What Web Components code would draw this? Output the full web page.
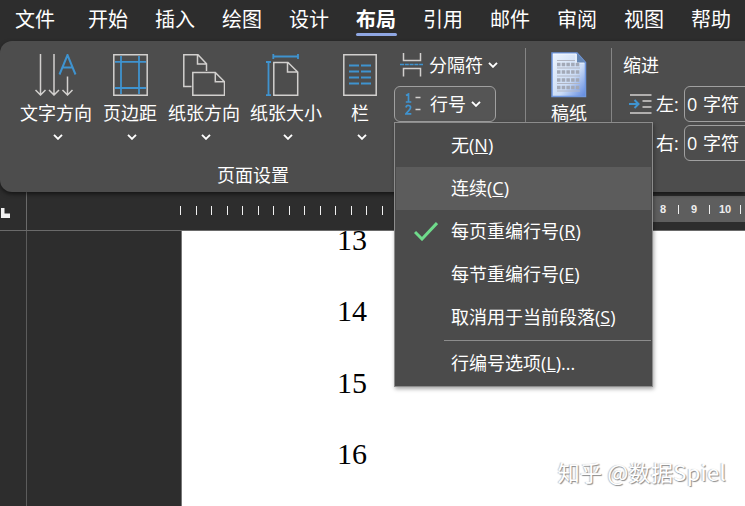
<!DOCTYPE html>
<html lang="zh-CN">
<head>
<meta charset="UTF-8">
<title>布局</title>
<style>
  html, body { height: 100%; }
  body {
    margin: 0;
    overflow: hidden;
    background: #2d2d2d;
    color: #fff;
    font: 18px/24px 'Open Sans', 'Noto Sans CJK SC', sans-serif;
  }
</style>
</head>
<body>
<word-window></word-window>

<script>
(function () {
  'use strict';

  // Base comum: clona o markup para um shadow root aberto
  function define(name, html) {
    customElements.define(name, class extends HTMLElement {
      constructor() {
        super();
        var tpl = document.createElement('template');
        tpl.innerHTML = typeof html === 'function' ? html(this) : html;
        this.attachShadow({ mode: 'open' }).appendChild(tpl.content.cloneNode(true));
      }
    });
  }

  /* ---------- ícones ---------- */
  var ICONS = {
    direction: [42, 42, `
      <g fill="none" stroke="#d2d0ce" stroke-width="1.5">
        <path d="M5.5 0v41M.5 36l5 5 5-5M19 0v41M14 36l5 5 5-5M32.5 22.5V41M27.5 36l5 5 5-5"/>
        <path d="M24.5 20.5L32.5 1l8 19.5M27.5 13.5h10" stroke="#3f93cf" stroke-width="2"/>
      </g>`],
    margins: [35, 42, `
      <path d="M.8.8h33.4v40.4H.8z" fill="none" stroke="#d2d0ce" stroke-width="1.5"/>
      <path d="M8 2v38M26 2v38M2 7.8h31M2 34h31" stroke="#3f93cf" stroke-width="1.8"/>`],
    orientation: [42, 42, `
      <g fill="none" stroke="#d2d0ce" stroke-width="1.5">
        <path d="M8.5 32.5H.8V.8H15l8.5 9V17M14.5 .8v9.2h9"/>
        <path d="M9.8 18.5h22.5l9.2 9.2v13.5H9.8zM32.3 18.5v9.2h9.2"/>
      </g>`],
    size: [33, 42, `
      <g fill="none" stroke-width="1.5">
        <path d="M7.8 8.5H22l9.7 9.5v23.2H7.8zM21.5 8.5V18h10.2" stroke="#d2d0ce"/>
        <path d="M7 2.5h25.5M7.3 0v5M32 0v5M2.5 8v33.5M0 8h5M0 41.2h5" stroke="#3f93cf" stroke-width="1.8"/>
      </g>`],
    columns: [34, 42, `
      <path d="M.8.8h32.4v40.4H.8z" fill="none" stroke="#d2d0ce" stroke-width="1.5"/>
      <path d="M6 11.5h10M18 11.5h10M6 17.5h10M18 17.5h10M6 23.5h10M18 23.5h10M6 29.5h10M18 29.5h10" stroke="#3f93cf" stroke-width="1.8"/>`],
    breaks: [23, 24, `
      <path d="M3.5 0v7.5h17V0M3.5 23.5v-8h17v8" fill="none" stroke="#d2d0ce" stroke-width="1.5"/>
      <path d="M0 11.5h23" stroke="#3f93cf" stroke-width="1.5" stroke-dasharray="4 .8"/>`],
    numbers: [17, 22, `
      <path d="M1 2.5L3.5 1v8M.8 9h5.5M1 14.5c.5-3 5-2.5 4.5 .3C5.2 17 2.5 18.5 1 20.8h5.3" fill="none" stroke="#3f93cf" stroke-width="1.7"/>
      <path d="M10.500 4.500h5M10.500 16.500h5" stroke="#d2d0ce" stroke-width="1.500"/>`],
    indent: [23, 21, `
      <path d="M1 1h21.5M13.5 7h9M13.5 13h9M1 19h21.5" stroke="#d2d0ce" stroke-width="1.5"/>
      <path d="M0 10h9M5.5 6l4 4-4 4" fill="none" stroke="#3f93cf" stroke-width="2"/>`],
    paper: [36, 46, `
      <defs>
        <linearGradient id="g" x1="0" y1="0" x2="1" y2="1">
          <stop offset="0" stop-color="#edf4fd"/><stop offset=".6" stop-color="#cbdcf6"/><stop offset="1" stop-color="#5c86df"/>
        </linearGradient>
      </defs>
      <path d="M1 1h25l8.5 9.5V44.5H1z" fill="url(#g)" stroke="#7098df" stroke-width="1.5"/>
      <path d="M2 2h23v9h8" fill="none" stroke="#fff" stroke-opacity=".7"/>
      <path d="M26 1v9.5h8.5z" fill="#6687b4"/>
      <path d="M6 8.5h18M6 16h23M6 24h23M6 31.5h23M6 39h23" stroke="#b1b5c2"/>
      <path d="M6 12.5h23M6 20h23M6 28h23M6 35.5h23" stroke="#a3a9b7" stroke-width="3.5" stroke-dasharray="3.5 1.2"/>`],
    chevron: [10, 6, `<path d="M1 .8l4 4 4-4" fill="none" stroke="#fff" stroke-width="1.9"/>`],
    check: [24, 19, `<path d="M1 10l7 7L23 1" fill="none" stroke="#6fdb8b" stroke-width="3"/>`],
    tabstop: [10, 10, `<path d="M1 0h3.5v5.500H10V10H1z" fill="#f2f2f2"/>`]
  };

  define('ui-icon', function (el) {
    var i = ICONS[el.getAttribute('name')];
    return `<style>:host { display: block; flex: none; } svg { display: block; }</style>
      <svg width="${i[0]}" height="${i[1]}" viewBox="0 0 ${i[0]} ${i[1]}">${i[2]}</svg>`;
  });

  /* ---------- abas ---------- */
  define('ribbon-tab', `
    <style>
      :host { display: block; height: 41px; font-size: 20px; line-height: 39px; white-space: nowrap; }
      :host(:first-child) { margin-right: 6px; }
      :host([active]) { font-weight: 700; }
      :host([active])::after {
        content: ''; display: block; height: 3px; margin: -6px -1px 0 0;
        border-radius: 2px; background: #8fa7e3;
      }
    </style>
    <slot></slot>`);

  define('ribbon-tabs', `
    <style>:host { display: flex; gap: 27px; height: 41px; padding-left: 15px; }</style>
    <slot></slot>`);

  /* ---------- botões ---------- */
  define('big-button', function (el) {
    var shift = el.getAttribute('shift') || 0;
    return `
      <style>
        :host { display: flex; flex-direction: column; align-items: center; white-space: nowrap; }
        .pic { height: 47px; margin-left: ${shift}px; }
        :host([plain]) .pic { height: 49px; }
        .arrow { margin: 9px 0 0 4px; }
      </style>
      <ui-icon class="pic" name="${el.getAttribute('icon')}"></ui-icon>
      <slot></slot>
      ${el.hasAttribute('plain') ? '' : '<ui-icon class="arrow" name="chevron"></ui-icon>'}`;
  });

  define('small-button', function (el) {
    return `
      <style>
        :host {
          display: grid; grid-template-columns: 29px auto 10px; align-items: center; justify-content: start;
          box-sizing: border-box; height: 36px; padding-left: 6px; white-space: nowrap;
        }
        .arrow { margin-left: 5px; }
        :host([open]) {
          width: 102px; padding-left: 10px; grid-template-columns: 25px auto 10px;
          background: #555; border: 1px solid #a0a0a0; border-radius: 6px;
        }
      </style>
      <ui-icon name="${el.getAttribute('icon')}"></ui-icon>
      <span><slot></slot></span>
      <ui-icon class="arrow" name="chevron"></ui-icon>`;
  });

  define('indent-field', `
    <style>
      :host { display: flex; align-items: center; white-space: nowrap; height: 36px; }
      .icon { width: 27px; margin-left: 5px; flex: none; }
      .label { width: 28px; flex: none; }
      .box {
        box-sizing: border-box; height: 36px; width: 110px; flex: none; padding-left: 2px;
        border: 1px solid #a0a0a0; border-radius: 6px; line-height: 34px; word-spacing: 1px;
      }
    </style>
    <span class="icon"><slot name="icon"></slot></span>
    <span class="label"><slot name="label"></slot></span>
    <span class="box"><slot></slot></span>`);

  /* ---------- menu suspenso ---------- */
  define('menu-item', function (el) {
    return `
      <style>
        :host { display: grid; grid-template-columns: 56px 1fr; align-items: center; height: 43px; white-space: nowrap; }
        :host([hover]) { background: #5c5c5c; margin: 0 1px; grid-template-columns: 55px 1fr; }
        .mark { padding-left: 19px; }
        .text { margin-top: -2px; }
      </style>
      <span class="mark">${el.hasAttribute('checked') ? '<ui-icon name="check"></ui-icon>' : ''}</span>
      <span class="text"><slot></slot></span>`;
  });

  define('drop-menu', `
    <style>
      :host {
        display: block; box-sizing: border-box; width: 259px; height: 265px; padding-top: 1px;
        background: #4b4b4b; border: 1px solid #8c8c8c; box-shadow: 1px 2px 4px rgba(0, 0, 0, .35);
      }
      ::slotted(hr) { margin: 1px 1px 1px 49px; border: 0; border-top: 1px solid #8c8c8c; }
    </style>
    <slot></slot>`);

  /* ---------- faixa de opções ---------- */
  define('layout-ribbon', `
    <style>
      :host {
        display: flex; box-sizing: border-box; height: 151px; position: relative; z-index: 2;
        background: #4d4d4d; border-radius: 12px 0 0 12px; box-shadow: 0 2px 4px rgba(0, 0, 0, .55);
      }
      .setup { width: 506px; padding-left: 19px; flex: none; display: flex; flex-direction: column; }
      .tools { display: flex; height: 122px; }
      .big { display: grid; grid-template-columns: 74px 74px 74px 90px 58px; padding-top: 13px; height: 110px; }
      .stack { display: flex; flex-direction: column; gap: 3px; padding: 6px 0 0 5px; }
      .anchor { position: relative; }
      drop-menu { position: absolute; left: 0; top: 36px; }
      .caption { padding-left: 198px; }
      .line { width: 1px; height: 132px; margin-top: 7px; background: #858585; flex: none; }
      .paper { width: 85px; padding-top: 11px; flex: none; }
      .paper big-button { margin-left: 1px; }
      .indent { padding: 12px 0 0 12px; flex: none; }
      .title { margin-left: -1px; }
      .first { margin: 9px 0 3px; }
    </style>
    <div class="setup">
      <div class="tools">
        <div class="big">
          <big-button icon="direction">文字方向</big-button>
          <big-button icon="margins">页边距</big-button>
          <big-button icon="orientation">纸张方向</big-button>
          <big-button icon="size" shift="-8">纸张大小</big-button>
          <big-button icon="columns">栏</big-button>
        </div>
        <div class="stack">
          <small-button icon="breaks">分隔符</small-button>
          <div class="anchor">
            <small-button icon="numbers" open>行号</small-button>
            <drop-menu>
              <menu-item>无(<u>N</u>)</menu-item>
              <menu-item hover>连续(<u>C</u>)</menu-item>
              <menu-item checked>每页重编行号(<u>R</u>)</menu-item>
              <menu-item>每节重编行号(<u>E</u>)</menu-item>
              <menu-item>取消用于当前段落(<u>S</u>)</menu-item>
              <hr>
              <menu-item>行编号选项(<u>L</u>)...</menu-item>
            </drop-menu>
          </div>
        </div>
      </div>
      <div class="caption">页面设置</div>
    </div>
    <div class="line"></div>
    <div class="paper"><big-button icon="paper" plain>稿纸</big-button></div>
    <div class="line"></div>
    <div class="indent">
      <div class="title">缩进</div>
      <indent-field class="first"><ui-icon slot="icon" name="indent"></ui-icon><span slot="label">左:</span>0 字符</indent-field>
      <indent-field><span slot="label">右:</span>0 字符</indent-field>
    </div>`);

  /* ---------- régua ---------- */
  define('page-ruler', function () {
    var ticks = '';
    for (var i = 0; i < 14; i++) ticks += '<i></i>';
    return `
      <style>
        :host { display: flex; height: 38px; border-bottom: 1px solid #6a6a6a; font: 700 11px/14px 'Liberation Sans', sans-serif; }
        .corner { width: 26px; border-right: 1px solid #6a6a6a; padding-top: 16px; box-sizing: content-box; }
        .ticks { display: flex; gap: 14.54px; padding: 14px 0 0 153px; width: 473px; box-sizing: border-box; }
        i { width: 1px; height: 9px; background: #f0f0f0; flex: none; }
        .scale { display: flex; flex: 1; align-items: center; height: 26px; margin-top: 4px; background: #5e5e5e; color: #eee; padding-left: 147.5px; }
        .scale span { width: 31px; text-align: center; flex: none; }
        .scale i { margin: 0 -.5px; }
      </style>
      <div class="corner"><ui-icon name="tabstop"></ui-icon></div>
      <div class="ticks">${ticks}</div>
      <div class="scale"><span>8</span><i></i><span>9</span><i></i><span>10</span><i></i></div>`;
  });

  /* ---------- documento ---------- */
  define('doc-page', `
    <style>
      :host { display: flex; flex: 1; min-height: 0; position: relative; overflow: hidden; }
      .gutter { width: 26px; border-right: 1px solid #5c5c5c; flex: none; }
      .desk { width: 154px; border-right: 1px solid #777; flex: none; }
      .page { flex: 1; background: #fff; color: #000; padding-left: 155px; font: 30px/71.5px 'Liberation Serif', serif; }
      .lines { margin-top: -27.5px; }
      .sign {
        position: absolute; right: 19px; bottom: 20px; color: #fff; font: 400 22px/30px 'Noto Sans CJK SC', sans-serif;
        text-shadow: 1px 1px 1px #888, -1px 0 1px #c4c4c4; white-space: pre; letter-spacing: .3px;
      }
    </style>
    <div class="gutter"></div>
    <div class="desk"></div>
    <div class="page">
      <div class="lines"><div>13</div><div>14</div><div>15</div><div>16</div></div>
    </div>
    <div class="sign">知乎 @数据Spiel</div>`);

  define('word-window', `
    <style>:host { display: flex; flex-direction: column; height: 100vh; overflow: hidden; }</style>
    <ribbon-tabs>
      <ribbon-tab>文件</ribbon-tab>
      <ribbon-tab>开始</ribbon-tab>
      <ribbon-tab>插入</ribbon-tab>
      <ribbon-tab>绘图</ribbon-tab>
      <ribbon-tab>设计</ribbon-tab>
      <ribbon-tab active>布局</ribbon-tab>
      <ribbon-tab>引用</ribbon-tab>
      <ribbon-tab>邮件</ribbon-tab>
      <ribbon-tab>审阅</ribbon-tab>
      <ribbon-tab>视图</ribbon-tab>
      <ribbon-tab>帮助</ribbon-tab>
    </ribbon-tabs>
    <layout-ribbon></layout-ribbon>
    <page-ruler></page-ruler>
    <doc-page></doc-page>`);
})();
</script>
</body>
</html>
